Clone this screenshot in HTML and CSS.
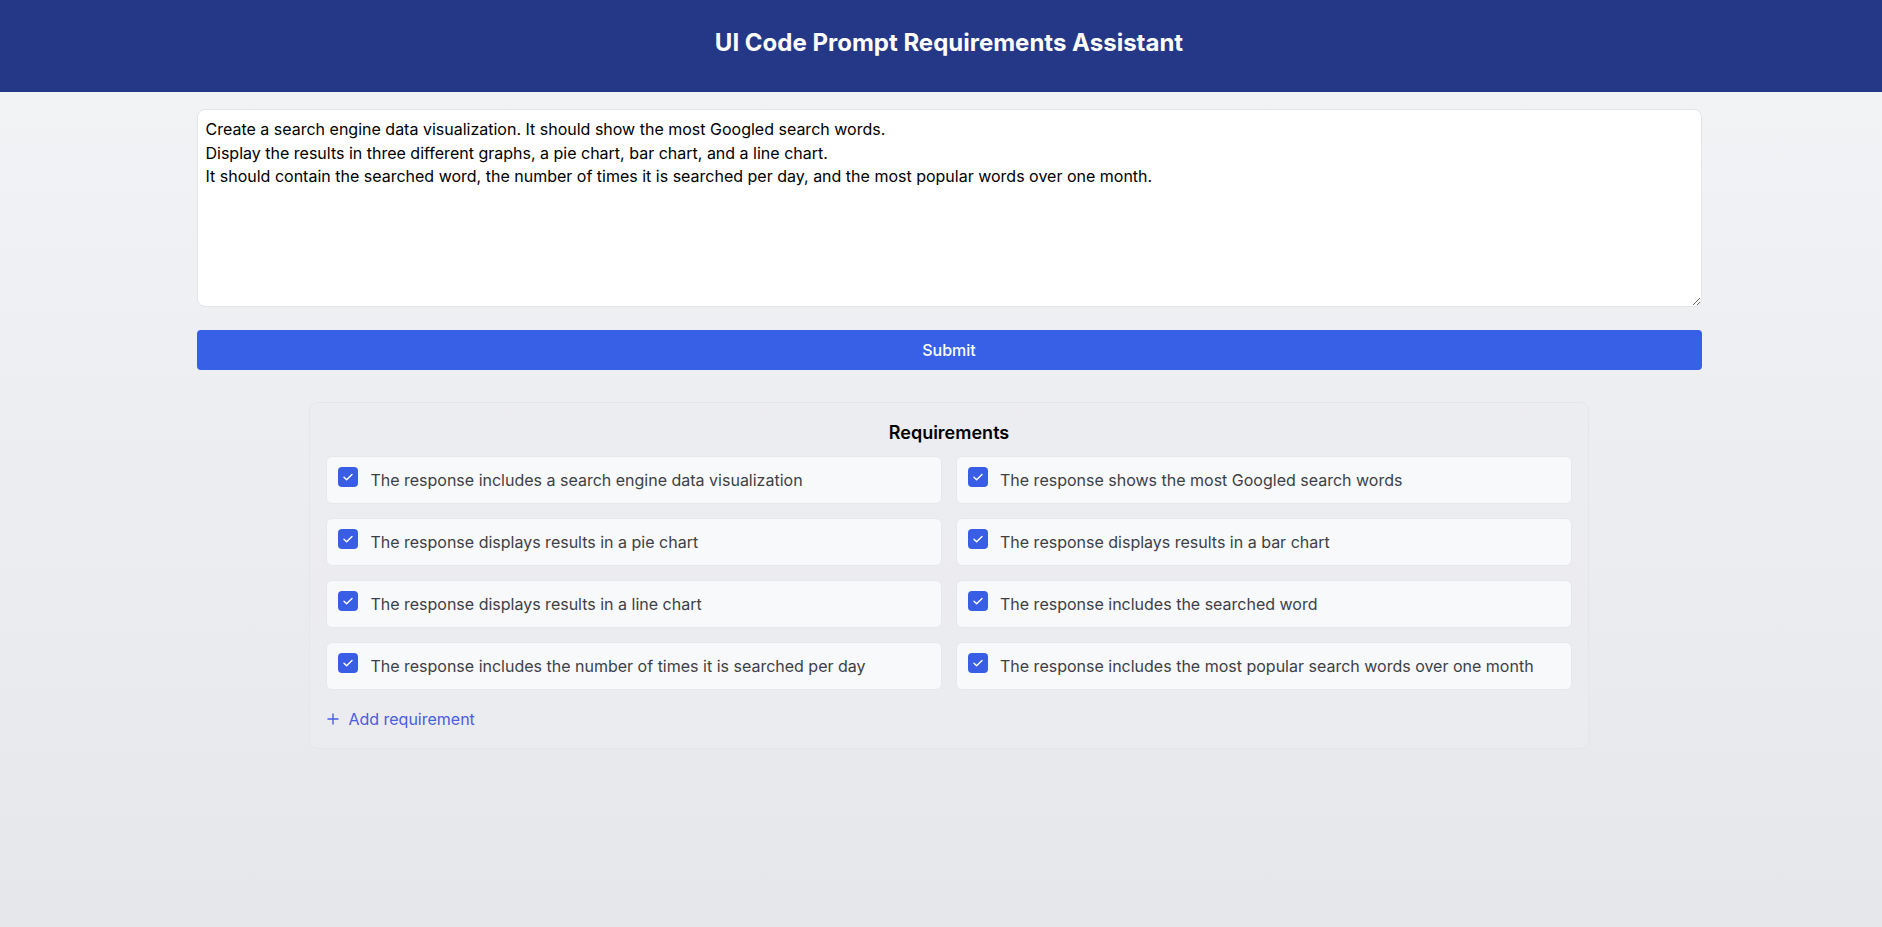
FILE: index.html
```html
<!DOCTYPE html>
<html lang="en">
<head>
<meta charset="utf-8">
<title>UI Code Prompt Requirements Assistant</title>
<link rel="stylesheet" href="styles.css">
</head>
<body>
<header class="app-header">
  <h1 class="app-title">UI Code Prompt Requirements Assistant</h1>
</header>
<main class="main">
  <div class="container">
    <textarea class="prompt-input">Create a search engine data visualization. It should show the most Googled search words.
Display the results in three different graphs, a pie chart, bar chart, and a line chart.
It should contain the searched word, the number of times it is searched per day, and the most popular words over one month.</textarea>
    <button class="submit-btn" type="button">Submit</button>
    <section class="req-panel">
      <h2 class="req-title">Requirements</h2>
      <div class="req-grid">
        <label class="req-card"><span class="check"><svg viewBox="0 0 20 20" width="20" height="20"><path d="M6 10.3l2.6 2.5L14 7.4" fill="none" stroke="#fff" stroke-width="1.4" stroke-linecap="round" stroke-linejoin="round"/></svg></span><span class="req-text">The response includes a search engine data visualization</span></label>
        <label class="req-card"><span class="check"><svg viewBox="0 0 20 20" width="20" height="20"><path d="M6 10.3l2.6 2.5L14 7.4" fill="none" stroke="#fff" stroke-width="1.4" stroke-linecap="round" stroke-linejoin="round"/></svg></span><span class="req-text">The response shows the most Googled search words</span></label>
        <label class="req-card"><span class="check"><svg viewBox="0 0 20 20" width="20" height="20"><path d="M6 10.3l2.6 2.5L14 7.4" fill="none" stroke="#fff" stroke-width="1.4" stroke-linecap="round" stroke-linejoin="round"/></svg></span><span class="req-text">The response displays results in a pie chart</span></label>
        <label class="req-card"><span class="check"><svg viewBox="0 0 20 20" width="20" height="20"><path d="M6 10.3l2.6 2.5L14 7.4" fill="none" stroke="#fff" stroke-width="1.4" stroke-linecap="round" stroke-linejoin="round"/></svg></span><span class="req-text">The response displays results in a bar chart</span></label>
        <label class="req-card"><span class="check"><svg viewBox="0 0 20 20" width="20" height="20"><path d="M6 10.3l2.6 2.5L14 7.4" fill="none" stroke="#fff" stroke-width="1.4" stroke-linecap="round" stroke-linejoin="round"/></svg></span><span class="req-text">The response displays results in a line chart</span></label>
        <label class="req-card"><span class="check"><svg viewBox="0 0 20 20" width="20" height="20"><path d="M6 10.3l2.6 2.5L14 7.4" fill="none" stroke="#fff" stroke-width="1.4" stroke-linecap="round" stroke-linejoin="round"/></svg></span><span class="req-text">The response includes the searched word</span></label>
        <label class="req-card"><span class="check"><svg viewBox="0 0 20 20" width="20" height="20"><path d="M6 10.3l2.6 2.5L14 7.4" fill="none" stroke="#fff" stroke-width="1.4" stroke-linecap="round" stroke-linejoin="round"/></svg></span><span class="req-text">The response includes the number of times it is searched per day</span></label>
        <label class="req-card"><span class="check"><svg viewBox="0 0 20 20" width="20" height="20"><path d="M6 10.3l2.6 2.5L14 7.4" fill="none" stroke="#fff" stroke-width="1.4" stroke-linecap="round" stroke-linejoin="round"/></svg></span><span class="req-text">The response includes the most popular search words over one month</span></label>
      </div>
      <button class="add-req" type="button"><svg class="plus" viewBox="0 0 12 12" width="12" height="12"><path d="M6 0.5v11M0.5 6h11" stroke="currentColor" stroke-width="1.4" fill="none"/></svg><span>Add requirement</span></button>
    </section>
  </div>
</main>
</body>
</html>
```
FILE: styles.css
```css
* { box-sizing: border-box; }
html, body { height: 100%; }
body {
  margin: 0;
  font-family: Inter, "Noto Sans", "Liberation Sans", sans-serif;
  background: linear-gradient(to bottom, #f3f4f6 0%, #e5e7eb 100%);
  color: #111;
}
.app-header {
  background: #253787;
  height: 92px;
  display: flex;
  align-items: center;
  justify-content: center;
  padding: 0 0 6px 16px;
}
.app-title {
  margin: 0;
  color: #fff;
  font-size: 24px;
  line-height: 30px;
  font-weight: 700;
}
.main {
  padding: 17px 0 0 16px;
}
.container {
  width: 1505px;
  margin: 0 auto;
  display: flex;
  flex-direction: column;
}
.prompt-input {
  display: block;
  width: 100%;
  height: 198px;
  padding: 8px;
  border: 1px solid #e3e5e9;
  border-radius: 8px;
  background: #fff;
  font-family: Inter, "Noto Sans", sans-serif;
  font-size: 16px;
  line-height: 23.5px;
  color: #000;
  resize: vertical;
  outline: none;
}
.submit-btn {
  margin-top: 23px;
  height: 40px;
  width: 100%;
  border: none;
  border-radius: 4px;
  background: #3760e6;
  color: #fff;
  font-family: Inter, "Noto Sans", sans-serif;
  font-size: 16px;
  font-weight: 500;
}
.req-panel {
  width: 85%;
  margin: 32px auto 0;
  border: 1px solid #e4e6ea;
  border-radius: 8px;
  background: rgba(236, 237, 240, 0.55);
  padding: 18px 16px 17px;
}
.req-title {
  margin: 0 0 11px;
  text-align: center;
  font-size: 18px;
  line-height: 24px;
  font-weight: 600;
  color: #000;
}
.req-grid {
  display: grid;
  grid-template-columns: 1fr 1fr;
  gap: 14px;
}
.req-card {
  display: flex;
  align-items: flex-start;
  gap: 12px;
  padding: 10px 11px;
  background: #f8f9fb;
  border: 1px solid #e6e8ec;
  border-radius: 6px;
}
.check {
  flex: none;
  width: 20px;
  height: 20px;
  border-radius: 4px;
  background: #3a5de6;
  display: flex;
}
.req-text {
  font-size: 16px;
  line-height: 26px;
  color: #3d3f47;
}
.add-req {
  margin-top: 17px;
  display: flex;
  align-items: center;
  gap: 9px;
  padding: 0 0 0 1px;
  border: none;
  background: none;
  color: #4a5de0;
  font-family: Inter, "Noto Sans", sans-serif;
  font-size: 16px;
  line-height: 24px;
}
.plus { flex: none; }
```
